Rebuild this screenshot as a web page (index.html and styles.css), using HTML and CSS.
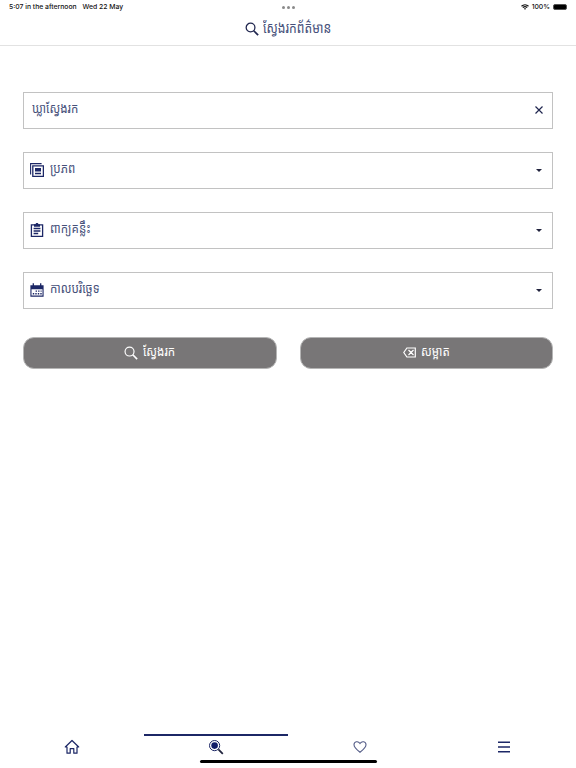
FILE: index.html
```html
<!DOCTYPE html>
<html lang="km">
<head>
  <meta charset="UTF-8" />
  <meta name="viewport" content="width=device-width, initial-scale=1.0"/>
  <title>ស្វែងរកព័ត៌មាន</title>
  <link rel="stylesheet" href="styles.css">
</head>
<body>
  <div class="status-bar">
    <div class="status-left"><span class="time">5:07 in the afternoon</span><span class="date">Wed 22 May</span></div>
    <div class="dots"><i></i><i></i><i></i></div>
    <div class="status-right">
      <svg class="wifi" viewBox="0 0 16 12" fill="none" stroke="#111" stroke-width="2.4"><path d="M1 4.5C5 .5 11 .5 15 4.5M3.7 7.2c2.5-2.4 6.1-2.4 8.6 0"/><path d="M8 11.5 5.8 9.3c1.3-1.1 3.1-1.1 4.4 0z" fill="#111" stroke="none"/></svg>
      <span class="percent">100%</span>
      <span class="battery"></span>
    </div>
  </div>

  <header class="header">
    <svg class="title-icon" viewBox="0 0 24 24" fill="none" stroke="#20264f" stroke-width="2.2"><circle cx="9.5" cy="9.5" r="7.5"/><path d="M15 15 22.5 22.5" stroke-width="3"/></svg>
    <h1 class="title">ស្វែងរកព័ត៌មាន</h1>
  </header>

  <main class="form">
    <div class="field">
      <span class="field-text">ឃ្លាស្វែងរក</span>
      <svg class="clear" viewBox="0 0 10 10" fill="none" stroke="#20264f" stroke-width="1.2"><path d="m1.5 1.5 7 7m0-7-7 7"/></svg>
    </div>
    <div class="field">
      <svg class="field-icon" viewBox="0 0 14 14" fill="none" stroke="#1c2766" stroke-width="1.1"><path d="M.6 11.5V.6h11"/><path d="M2.8 2.8h10.6v10.6H2.8z" stroke-width="1.3"/><path d="M5 5h6v3.4H5zM5 9.8h6v1.4H5z" fill="#1c2766" stroke="none"/></svg>
      <span class="field-text">ប្រភព</span>
      <span class="arrow"></span>
    </div>
    <div class="field">
      <svg class="field-icon" viewBox="0 0 14 14" fill="none" stroke="#1c2766" stroke-width="1.3"><path d="M1.4 1.9h11.2v11.4H1.4z"/><path d="M4 1.3h1.6a1.4 1.4 0 0 1 2.8 0H10v2.4H4z" fill="#1c2766" stroke="none"/><path d="M3.6 5.5h6.8M3.6 8h6.8M3.6 10.5h4.6"/></svg>
      <span class="field-text">ពាក្យគន្លឹះ</span>
      <span class="arrow"></span>
    </div>
    <div class="field">
      <svg class="field-icon" viewBox="0 0 14 14"><path d="M.4 2.2h13.2v11.5H.4zm1.1 4v6.4h11V6.2z" fill="#1c2766" fill-rule="evenodd"/><path d="M3.3.3v3M10.7.3v3" stroke="#1c2766" stroke-width="1.3"/><path d="M5.6 8.1h6M2.8 10.8h9" stroke="#1c2766" stroke-width="1.4" stroke-dasharray="1.4 1.1"/></svg>
      <span class="field-text">កាលបរិច្ឆេទ</span>
      <span class="arrow"></span>
    </div>
    <div class="buttons">
      <button class="btn">
        <svg class="btn-search" viewBox="0 0 24 24" fill="none" stroke="#fff" stroke-width="2"><circle cx="9.5" cy="9.5" r="7.7"/><path d="M15 15 22.5 22.5" stroke-width="2.8"/></svg>
        <span class="btn-text">ស្វែងរក</span>
      </button>
      <button class="btn">
        <svg class="btn-erase" viewBox="0 0 13 11" fill="none" stroke="#fff"><path d="M3.9 1h8.4v9H3.9L.8 5.5zM5.5 3l5 5m0-5-5 5" stroke-width="1.2"/></svg>
        <span class="btn-text">សម្អាត</span>
      </button>
    </div>
  </main>

  <nav class="tabs">
    <a class="tab"><svg viewBox="0 0 16 16" fill="none" stroke="#1c2766" stroke-width="1.2" stroke-linejoin="round"><path d="M1.3 8 8 1.5 14.7 8H13v6.2H9.8V9.6H6.2v4.6H3V8z"/></svg></a>
    <a class="tab active"><svg viewBox="0 0 16 16" fill="none" stroke="#1c2766"><circle cx="6.6" cy="6.6" r="5.1" stroke-width="1"/><circle cx="6.6" cy="6.6" r="3.3" fill="#101c68" stroke="none"/><path d="m10.4 10.4 4.4 4.4" stroke="#20233d" stroke-width="1.8"/></svg></a>
    <a class="tab"><svg viewBox="0 0 16 16" fill="none" stroke="#555d88" stroke-width="1.1"><path d="M8 13.3C4.2 10.3 2 8.4 2 5.8 2 2.4 6.2 1.7 8 4.5 9.8 1.7 14 2.4 14 5.8c0 2.6-2.2 4.5-6 7.5z"/></svg></a>
    <a class="tab"><svg viewBox="0 0 16 16" fill="none" stroke="#1c2766" stroke-width="1.4"><path d="M2 3.3h12M2 8h12M2 12.7h12"/></svg></a>
  </nav>
  <div class="home-indicator"></div>
</body>
</html>
```
FILE: styles.css
```css
* {
  box-sizing: border-box;
}

body {
  margin: 0;
  height: 768px;
  display: flex;
  flex-direction: column;
  background: #fff;
  color: #46507a;
  font-family: "Noto Sans Khmer", "Khmer OS", "Noto Sans", sans-serif;
  overflow: hidden;
}

.status-bar {
  display: grid;
  grid-template-columns: 1fr auto 1fr;
  align-items: center;
  height: 14px;
  padding: 0 9px;
  font: 500 6.8px/14px Inter, sans-serif;
  color: #111;
}

.status-left {
  display: flex;
  gap: 6px;
}

.dots {
  display: flex;
  gap: 2px;
}

.dots i {
  width: 3px;
  height: 3px;
  border-radius: 50%;
  background: #8a8a8a;
}

.status-right {
  display: flex;
  justify-content: flex-end;
  align-items: center;
  gap: 3px;
}

.wifi {
  width: 8px;
  height: 6px;
}

.battery {
  width: 14px;
  height: 6px;
  border: 1px solid #555;
  border-radius: 2px;
  background: #000;
}

.header {
  display: flex;
  align-items: center;
  justify-content: center;
  gap: 5px;
  height: 32px;
  border-bottom: 1px solid #e2e2e2;
}

.title-icon {
  width: 14px;
  height: 14px;
  margin-bottom: 1px;
}

/* Khmer labels are set tall and narrow */
.title,
.field-text,
.btn-text {
  font-weight: 400;
  line-height: 20px;
  white-space: nowrap;
  transform: scaleX(0.84);
  transform-origin: left center;
}

.title {
  margin: 0 -13px 5px -1px;
  font-size: 14.5px;
}

.form {
  flex: 1;
  display: flex;
  flex-direction: column;
  gap: 23px;
  padding: 45.5px 23px 0;
}

.field {
  display: flex;
  align-items: center;
  justify-content: space-between;
  height: 37px;
  padding: 0 8px 0 6px;
  border: 1px solid #c2c2c2;
}

.field-icon {
  width: 14px;
  height: 14px;
  margin-right: 6px;
}

.field-text {
  margin: 0 auto 4px 0;
  font-size: 13.8px;
}

.field:first-child {
  padding-left: 7.5px;
}

.clear {
  width: 10px;
  height: 10px;
}

.arrow {
  margin-right: 2px;
  border: 3px solid transparent;
  border-top-color: #20233d;
  border-bottom: 0;
}

.buttons {
  display: flex;
  gap: 23px;
  margin-top: 5px;
}

.btn {
  flex: 1;
  display: flex;
  align-items: center;
  justify-content: center;
  gap: 5px;
  height: 32px;
  padding: 0 3px 0 0;
  border: 1px solid #b5b5b5;
  border-radius: 11px;
  background: #787677;
  color: #fff;
  font-family: inherit;
  font-size: 13.8px;
}

.btn-text {
  margin: 0 -8px 3px 0;
}

.btn-search {
  width: 14px;
  height: 14px;
}

.btn-erase {
  width: 13px;
  height: 11px;
}

.tabs {
  display: flex;
  height: 26px;
}

.tab {
  flex: 1;
  display: flex;
  align-items: center;
  justify-content: center;
  padding-bottom: 2px;
  border-top: 2px solid transparent;
}

.tab.active {
  border-top-color: #1c2766;
}

.tab svg {
  width: 16px;
  height: 16px;
}

.home-indicator {
  width: 177px;
  height: 3px;
  margin: 0 auto 5px;
  border-radius: 2px;
  background: #000;
}
```
